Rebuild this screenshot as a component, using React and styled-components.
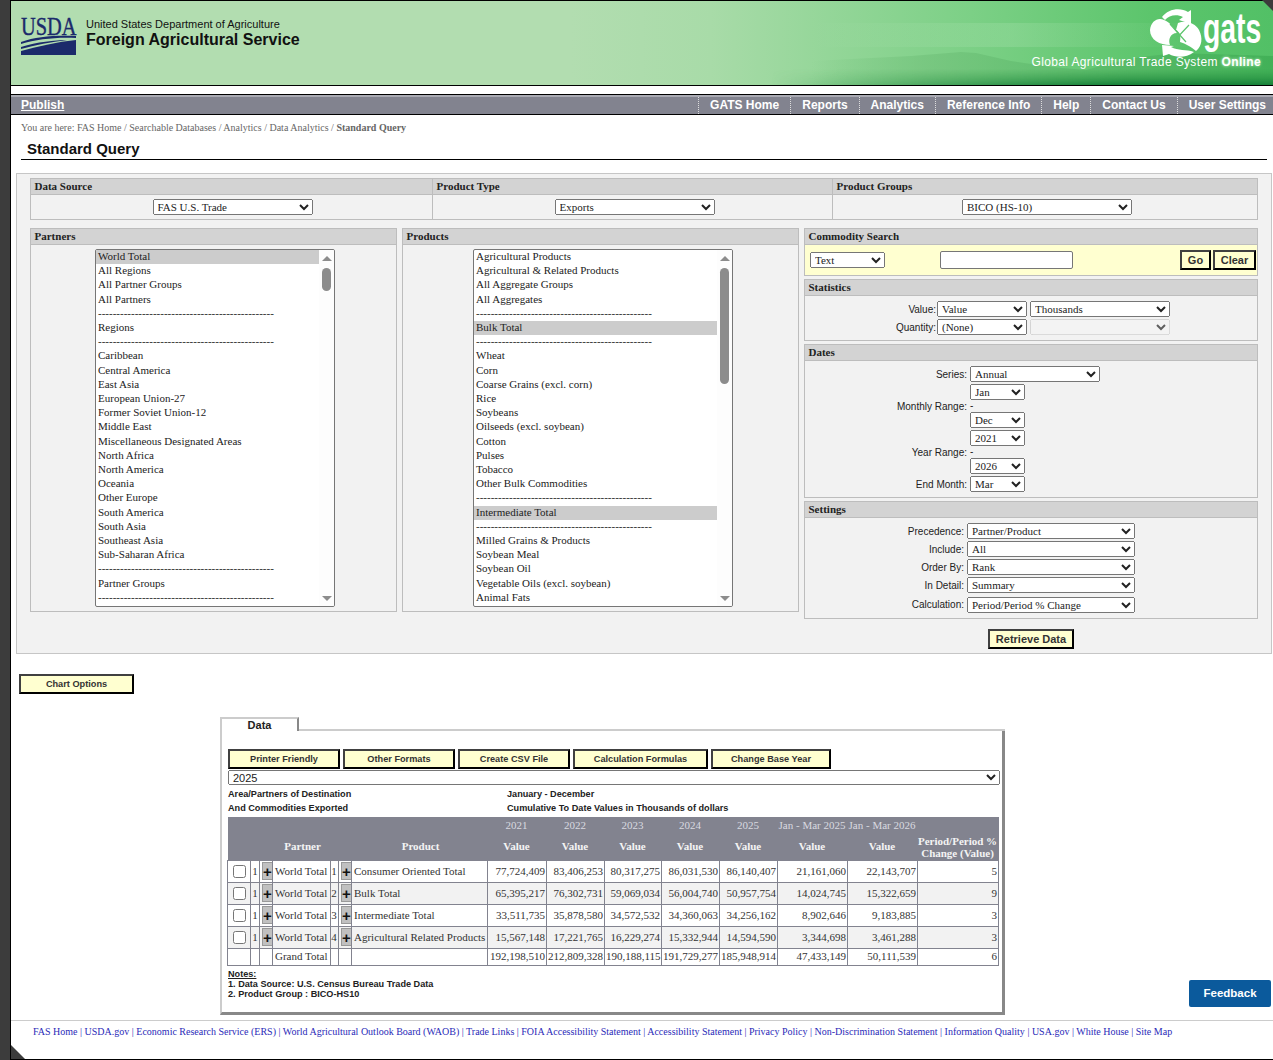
import React from 'react';
import styled, { createGlobalStyle } from 'styled-components';

const SANS = '"Liberation Sans", Arial, sans-serif';
const SERIF = '"Liberation Serif", "Times New Roman", serif';

const dash = '-'.repeat(48);

const partners = [
  'World Total', 'All Regions', 'All Partner Groups', 'All Partners', dash, 'Regions', dash,
  'Caribbean', 'Central America', 'East Asia', 'European Union-27', 'Former Soviet Union-12',
  'Middle East', 'Miscellaneous Designated Areas', 'North Africa', 'North America', 'Oceania',
  'Other Europe', 'South America', 'South Asia', 'Southeast Asia', 'Sub-Saharan Africa', dash,
  'Partner Groups', dash,
];

const products = [
  'Agricultural Products', 'Agricultural & Related Products', 'All Aggregate Groups', 'All Aggregates',
  dash, 'Bulk Total', dash, 'Wheat', 'Corn', 'Coarse Grains (excl. corn)', 'Rice', 'Soybeans',
  'Oilseeds (excl. soybean)', 'Cotton', 'Pulses', 'Tobacco', 'Other Bulk Commodities', dash,
  'Intermediate Total', dash, 'Milled Grains & Products', 'Soybean Meal', 'Soybean Oil',
  'Vegetable Oils (excl. soybean)', 'Animal Fats',
];

const navItems = ['GATS Home', 'Reports', 'Analytics', 'Reference Info', 'Help', 'Contact Us', 'User Settings'];
const dataButtons = [
  ['Printer Friendly', 112], ['Other Formats', 112], ['Create CSV File', 112],
  ['Calculation Formulas', 135], ['Change Base Year', 120],
];
const years = ['2021', '2022', '2023', '2024', '2025', 'Jan - Mar 2025', 'Jan - Mar 2026'];
const colWidths = [23, 9, 13, 58, 8, 13, 136, 59, 58, 57, 58, 58, 70, 70, 81];

const rows = [
  ['1', 'Consumer Oriented Total', '77,724,409', '83,406,253', '80,317,275', '86,031,530', '86,140,407', '21,161,060', '22,143,707', '5'],
  ['2', 'Bulk Total', '65,395,217', '76,302,731', '59,069,034', '56,004,740', '50,957,754', '14,024,745', '15,322,659', '9'],
  ['3', 'Intermediate Total', '33,511,735', '35,878,580', '34,572,532', '34,360,063', '34,256,162', '8,902,646', '9,183,885', '3'],
  ['4', 'Agricultural Related Products', '15,567,148', '17,221,765', '16,229,274', '15,332,944', '14,594,590', '3,344,698', '3,461,288', '3'],
];
const grandTotal = ['192,198,510', '212,809,328', '190,188,115', '191,729,277', '185,948,914', '47,433,149', '50,111,539', '6'];

const footerLinks = [
  'FAS Home', 'USDA.gov', 'Economic Research Service (ERS)', 'World Agricultural Outlook Board (WAOB)',
  'Trade Links', 'FOIA Accessibility Statement', 'Accessibility Statement', 'Privacy Policy',
  'Non-Discrimination Statement', 'Information Quality', 'USA.gov', 'White House', 'Site Map',
];

const Global = createGlobalStyle`
  html, body {
    margin: 0;
    padding: 0;
    background: #3c3c3c;
  }
  * { box-sizing: border-box; }
`;

const Page = styled.div`
  position: relative;
  margin-left: 10px;
  width: 1263px;
  height: 1060px;
  overflow: hidden;
  background: #fff;
  border-left: 1px solid #000;
  border-bottom: 1px solid #000;
  font-family: ${SANS};
`;
const CornerTop = styled.div`
  position: absolute;
  top: 0;
  right: 0;
  width: 0;
  height: 0;
  border-top: 11px solid #3c3c3c;
  border-left: 11px solid transparent;
  z-index: 3;
`;
const CornerBottom = styled.div`
  position: absolute;
  bottom: -1px;
  left: -1px;
  width: 0;
  height: 0;
  border-bottom: 16px solid #3c3c3c;
  border-right: 16px solid transparent;
`;

const Header = styled.header`
  position: relative;
  height: 86px;
  border-top: 1px solid #000;
  border-bottom: 1px solid #000;
  background: linear-gradient(90deg, #b2ddb0 0, #b2ddb0 560px, #a8dba8 700px, #7cd086 960px, #5cc56c 1140px, #52c066 1262px);
  display: flex;
  justify-content: space-between;
  overflow: hidden;
`;
const SceneryArt = styled.svg`
  position: absolute;
  left: 0;
  top: 0;
`;
const Brand = styled.div`
  position: relative;
  display: flex;
  gap: 9px;
  padding: 11px 0 0 10px;
`;
const BrandText = styled.div`
  padding-top: 6px;
  color: #111;
`;
const Dept = styled.div`
  font-size: 11px;
  line-height: 13px;
`;
const Agency = styled.div`
  font-size: 16px;
  font-weight: bold;
  line-height: 18px;
`;
const Gats = styled.div`
  position: relative;
  display: flex;
  flex-direction: column;
  align-items: flex-end;
  padding: 1px 12px 0 0;
`;
const Tagline = styled.div`
  margin-top: -2px;
  color: #fff;
  font-size: 12px;
  line-height: 14px;
  letter-spacing: 0.36px;
  white-space: nowrap;
  b { text-shadow: 0 0 3px #d8ffd8; }
`;

const Nav = styled.nav`
  margin-top: 8px;
  height: 21px;
  display: flex;
  justify-content: space-between;
  background: #82838f;
  border-top: 1px solid #000;
  border-bottom: 1px solid #000;
  box-shadow: inset 0 2px 0 #a9aab3;
  padding: 2px 7px 0 10px;
  font-size: 12px;
  font-weight: bold;
  line-height: 17px;
  color: #fff;
`;
const Publish = styled.a`
  color: #fff;
  text-decoration: underline;
`;
const NavList = styled.div`
  display: flex;
`;
const NavItem = styled.a`
  padding: 0 0 0 11px;
  margin-left: 11px;
  border-left: 1px dotted #ddd;
  color: #fff;
`;

const Crumbs = styled.div`
  margin: 7px 0 0 10px;
  font-family: ${SERIF};
  font-size: 10px;
  line-height: 12px;
  color: #666;
`;
const Title = styled.h1`
  margin: 5px 0 0 10px;
  width: 1246px;
  height: 21px;
  padding-left: 6px;
  border-bottom: 1px solid #000;
  font-size: 15px;
  line-height: 20px;
  font-weight: bold;
  color: #111;
`;

const Query = styled.div`
  margin: 13px 0 0 5px;
  width: 1256px;
  padding: 4px 0 4px 13px;
  background: #f2f2f2;
  border: 1px solid #c6c6c6;
`;
const TopRow = styled.div`
  display: flex;
`;
const MainRow = styled.div`
  display: flex;
  align-items: flex-start;
  gap: 5px;
  margin-top: 8px;
`;
const Stack = styled.div`
  display: flex;
  flex-direction: column;
  gap: 3px;
  width: 454px;
`;
const Section = styled.section`
  width: ${p => p.$w ? `${p.$w}px` : '100%'};
  height: ${p => p.$h ? `${p.$h}px` : 'auto'};
  border: 1px solid #bdbdbd;
  margin-left: ${p => p.$joined ? '-1px' : '0'};
`;
const Heading = styled.div`
  height: 16px;
  padding-left: 3.5px;
  background: #d3d3d3;
  border-bottom: 1px solid #bdbdbd;
  font-family: ${SERIF};
  font-size: 11px;
  font-weight: bold;
  line-height: 15px;
  color: #222;
`;
const Centered = styled.div`
  display: flex;
  justify-content: center;
  padding: 4px 0 0 ${p => p.$shift || 0}px;
`;
const Select = styled.select`
  display: block;
  margin: ${p => p.$mt || 0}px 0 0;
  width: ${p => p.$w}px;
  height: 16px;
  font-family: ${SERIF};
  font-size: 11px;
  color: #222;
`;

const ListHolder = styled.div`
  display: flex;
  justify-content: center;
  padding: 4px 0 4px ${p => p.$shift || 0}px;
`;
const List = styled.div`
  display: flex;
  width: ${p => p.$w}px;
  height: 358px;
  background: #fff;
  border: 1px solid #767676;
  border-radius: 2px;
  overflow: hidden;
`;
const Options = styled.div`
  flex: 1;
  min-width: 0;
  font-family: ${SERIF};
  font-size: 11px;
  color: #222;
`;
const Option = styled.div`
  padding: 0 0 1px 2px;
  line-height: 13.2px;
  white-space: nowrap;
  background: ${p => p.$selected ? '#cccccc' : 'transparent'};
`;
const Scrollbar = styled.div`
  width: 15px;
  flex: none;
  display: flex;
  flex-direction: column;
  align-items: center;
  padding: 6px 0 5px;
  background: #fdfdfd;
`;
const ArrowUp = styled.div`
  width: 0;
  height: 0;
  border-left: 5px solid transparent;
  border-right: 5px solid transparent;
  border-bottom: 5px solid #8c8c8c;
`;
const ArrowDown = styled(ArrowUp)`
  margin-top: auto;
  border-bottom: 0;
  border-top: 5px solid #8c8c8c;
`;
const Thumb = styled.div`
  margin-top: 7px;
  width: 9px;
  height: ${p => p.$h}px;
  background: #8c8c8c;
  border-radius: 5px;
`;

const SearchBody = styled.div`
  height: 30px;
  display: flex;
  align-items: center;
  padding: 0 1px 0 5px;
  background: #ffffd0;
`;
const SearchInput = styled.input`
  margin-left: 55px;
  width: 133px;
  height: 18px;
  padding: 0 3px;
  border: 1px solid #767676;
  border-radius: 2px;
  background: #fff;
`;
const YellowButton = styled.button`
  display: block;
  width: ${p => p.$w}px;
  height: 20px;
  margin: ${p => p.$m || '0'};
  padding: 0 0 ${p => p.$small ? 1 : 0}px;
  background: #ffffd0;
  border: 2px solid #000;
  border-top-color: #404040;
  border-left-color: #404040;
  font-family: ${SANS};
  font-size: ${p => p.$small ? 9.2 : 11}px;
  font-weight: bold;
  color: #333;
  white-space: nowrap;
`;
const Form = styled.div`
  display: grid;
  grid-template-columns: ${p => p.$label}px 1fr;
  column-gap: ${p => p.$gap}px;
  row-gap: 2px;
  padding-top: 5px;
  align-items: center;
`;
const Label = styled.div`
  padding-top: 1px;
  text-align: right;
  font-size: 10px;
  line-height: 12px;
  color: #222;
`;
const Inline = styled.div`
  display: flex;
  gap: 3px;
`;
const Range = styled.div`
  font-size: 10px;
  line-height: 12px;
  color: #222;
`;
const RetrieveRow = styled.div`
  display: flex;
  justify-content: flex-end;
  padding: 10px 0 0;
  width: 1044px;
`;

const Chart = styled.div`
  margin: 20px 0 0 8px;
`;
const TabArea = styled.div`
  margin: 23px 0 0 209px;
  width: 785px;
`;
const TabStrip = styled.div`
  display: flex;
  height: 14px;
`;
const Tab = styled.div`
  width: 79px;
  border-top: 2px solid #ccc;
  border-left: 2px solid #ccc;
  border-right: 2px solid #888;
  text-align: center;
  font-size: 11px;
  font-weight: bold;
  line-height: 12px;
  color: #222;
`;
const TabRule = styled.div`
  flex: 1;
  border-bottom: 2px solid #ccc;
`;
const TabBody = styled.div`
  padding: 18px 0 13px 6px;
  border-left: 2px solid #ccc;
  border-right: 3px solid #888;
  border-bottom: 3px solid #888;
`;
const ButtonRow = styled.div`
  display: flex;
  gap: 3px;
`;
const YearSelect = styled.select`
  display: block;
  margin-top: 1px;
  width: 772px;
  height: 15px;
  padding: 0 0 2px;
  font-family: ${SANS};
  font-size: 11px;
  color: #222;
`;
const Caption = styled.div`
  display: grid;
  grid-template-columns: 279px 1fr;
  margin-top: 2px;
  font-size: 9.15px;
  font-weight: bold;
  line-height: 14px;
  color: #222;
`;
const Table = styled.table`
  margin: 2px 0 0 -1px;
  width: 772px;
  table-layout: fixed;
  border-collapse: collapse;
  font-family: ${SERIF};
  font-size: 11px;
  color: #333;
`;
const Col = styled.col`
  width: ${p => p.$w}px;
`;
const HeadRow = styled.tr`
  height: ${p => p.$h}px;
`;
const Head = styled.th`
  padding: 0 ${p => p.$nudge ? 0 : 1}px ${p => p.$lift || 0}px ${p => p.$nudge ? 2 : 0}px;
  background: #82838f;
  color: ${p => p.$light ? '#d9dae0' : '#f4f4f4'};
  font-weight: ${p => p.$light ? 'normal' : 'bold'};
  line-height: 12px;
  text-align: center;
  white-space: nowrap;
`;
const Row = styled.tr`
  height: ${p => p.$total ? 17 : 22}px;
  background: ${p => p.$alt ? '#f2f2f2' : '#fff'};
`;
const Cell = styled.td`
  padding: 0 1px ${p => p.$lift || 0}px ${p => p.$pad ?? 1}px;
  border: 1px solid #82838f;
  text-align: ${p => p.$align || 'left'};
  line-height: 12px;
  white-space: nowrap;
  overflow: hidden;
`;
const ButtonCell = styled.td`
  padding: 0;
  border: 1px solid #82838f;
`;
const Check = styled.input`
  display: block;
  margin: 0 0 0 5px;
  width: 13px;
  height: 13px;
`;
const Plus = styled.div`
  margin: 0 0 0 2px;
  width: 11px;
  height: 18px;
  background: #c0c0c0;
  border: 1px solid #999;
  text-align: center;
  font-family: ${SANS};
  font-size: 15px;
  font-weight: bold;
  line-height: 18px;
  color: #111;
`;
const Notes = styled.div`
  margin-top: 3px;
  font-size: 9.15px;
  font-weight: bold;
  line-height: 10px;
  color: #222;
  u { display: block; }
`;
const Feedback = styled.a`
  position: absolute;
  left: 1178px;
  top: 980px;
  width: 82px;
  height: 27px;
  background: #0b5a9c;
  border-radius: 2px;
  color: #fff;
  font-size: 11.5px;
  font-weight: bold;
  line-height: 27px;
  text-align: center;
`;
const Footer = styled.footer`
  margin-top: 5px;
  padding: 5px 0 0 22px;
  border-top: 1px solid #ccc;
  font-family: ${SERIF};
  font-size: 10px;
  line-height: 12px;
  color: #2a2ab8;
  white-space: nowrap;
`;

function UsdaLogo() {
  return (
    <svg width="56" height="44" viewBox="0 0 56 44">
      <text transform="translate(0 23) scale(0.785 1)" fontFamily={SERIF} fontSize="26" fill="#1b2a6b" stroke="#1b2a6b" strokeWidth="0.4">USDA</text>
      <path d="M0 30 C16 24 36 23 55 24 L55 26 C36 25 16 27 0 32 Z" fill="#1b2a6b" />
      <path d="M0 35 C16 30 34 28 46 28 C30 30 14 33 0 37 Z" fill="#1b2a6b" />
      <path d="M0 39 C18 34 36 30 55 28 L55 43 L0 43 Z" fill="#1b2a6b" />
    </svg>
  );
}

function GatsLogo() {
  return (
    <svg width="113" height="55" viewBox="0 0 113 55">
      <g transform="translate(2 6)" fill="#fff">
        <path d="M12 9 C18 1 30 -1 38 4 L41 2 L41 16 L29 12 L33 9 C27 6 19 7 15 12 Z" />
        <path d="M0 22 C1 13 8 9 14 12 C20 14 24 20 27 25 C20 25 18 32 20 37 C10 37 0 32 0 22 Z" />
        <path d="M28 15 C36 12 45 15 49 22 C53 30 52 38 46 43 C40 38 36 36 30 34 C31 28 30 24 26 22 Z" />
        <path d="M21 39 C28 43 36 41 44 44 C36 50 26 50 19 46 L13 48 L12 37 L24 38 Z" />
      </g>
      <path d="M22 22 L38 40 M41 23 L27 38" stroke="#5cc56c" strokeWidth="1.2" fill="none" />
      <text transform="translate(55 41) scale(0.66 1)" fontFamily={SANS} fontSize="43" fontWeight="bold" fill="#fff">gats</text>
    </svg>
  );
}

function Scenery() {
  return (
    <SceneryArt width="1262" height="84" viewBox="0 0 1262 84">
      <defs>
        <linearGradient id="hill" x1="0" x2="1" y1="0" y2="0">
          <stop offset="0" stopColor="#6fbf78" stopOpacity="0" />
          <stop offset="0.25" stopColor="#6fbf78" stopOpacity="0.55" />
          <stop offset="1" stopColor="#3fae55" stopOpacity="0.85" />
        </linearGradient>
        <linearGradient id="ground" x1="0" x2="0" y1="0" y2="1">
          <stop offset="0" stopColor="#2f9c45" stopOpacity="0" />
          <stop offset="1" stopColor="#17803a" stopOpacity="1" />
        </linearGradient>
        <linearGradient id="fade" x1="0" x2="1" y1="0" y2="0">
          <stop offset="0" stopColor="#fff" stopOpacity="0" />
          <stop offset="0.7" stopColor="#fff" stopOpacity="1" />
          <stop offset="1" stopColor="#fff" stopOpacity="1" />
        </linearGradient>
        <linearGradient id="glow" x1="0" x2="1" y1="0" y2="0">
          <stop offset="0" stopColor="#d8f5d8" stopOpacity="0" />
          <stop offset="0.5" stopColor="#d8f5d8" stopOpacity="0.16" />
          <stop offset="1" stopColor="#d8f5d8" stopOpacity="0" />
        </linearGradient>
        <mask id="fadeMask">
          <rect x="760" width="502" height="84" fill="url(#fade)" />
        </mask>
      </defs>
      <rect x="800" y="22" width="400" height="24" fill="url(#glow)" />
      <path d="M800 60 L900 55 L950 51 L965 52 L1000 60 L1040 66 L1075 69 L1100 62 L1130 56 L1165 52 L1262 55 L1262 84 L800 84 Z" fill="url(#hill)" />
      <rect x="760" y="68" width="502" height="16" fill="url(#ground)" mask="url(#fadeMask)" />
    </SceneryArt>
  );
}

function ListBox({ items, selected, width, thumb }) {
  return (
    <List $w={width}>
      <Options>
        {items.map((item, i) => (
          <Option key={i} $selected={selected.includes(item)}>{item}</Option>
        ))}
      </Options>
      <Scrollbar>
        <ArrowUp />
        <Thumb $h={thumb} />
        <ArrowDown />
      </Scrollbar>
    </List>
  );
}

function Pick({ value, w, mt, disabled }) {
  return (
    <Select $w={w} $mt={mt} disabled={disabled} defaultValue={value}>
      <option value={value}>{value}</option>
    </Select>
  );
}

export default function App() {
  return (
    <Page>
      <Global />
      <CornerTop />
      <CornerBottom />

      <Header>
        <Scenery />
        <Brand>
          <UsdaLogo />
          <BrandText>
            <Dept>United States Department of Agriculture</Dept>
            <Agency>Foreign Agricultural Service</Agency>
          </BrandText>
        </Brand>
        <Gats>
          <GatsLogo />
          <Tagline>Global Agricultural Trade System <b>Online</b></Tagline>
        </Gats>
      </Header>

      <Nav>
        <Publish>Publish</Publish>
        <NavList>
          {navItems.map(item => <NavItem key={item}>{item}</NavItem>)}
        </NavList>
      </Nav>

      <Crumbs>You are here: FAS Home / Searchable Databases / Analytics / Data Analytics / <b>Standard Query</b></Crumbs>
      <Title>Standard Query</Title>

      <Query>
        <TopRow>
          <Section $w={403} $h={42}>
            <Heading>Data Source</Heading>
            <Centered $shift={2}><Pick value="FAS U.S. Trade" w={160} /></Centered>
          </Section>
          <Section $w={401} $h={42} $joined>
            <Heading>Product Type</Heading>
            <Centered $shift={4}><Pick value="Exports" w={160} /></Centered>
          </Section>
          <Section $w={426} $h={42} $joined>
            <Heading>Product Groups</Heading>
            <Centered $shift={4}><Pick value="BICO (HS-10)" w={170} /></Centered>
          </Section>
        </TopRow>

        <MainRow>
          <Section $w={367}>
            <Heading>Partners</Heading>
            <ListHolder $shift={3}>
              <ListBox items={partners} selected={['World Total']} width={240} thumb={23} />
            </ListHolder>
          </Section>
          <Section $w={397}>
            <Heading>Products</Heading>
            <ListHolder $shift={5}>
              <ListBox items={products} selected={['Bulk Total', 'Intermediate Total']} width={260} thumb={116} />
            </ListHolder>
          </Section>
          <Stack>
            <Section $h={48}>
              <Heading>Commodity Search</Heading>
              <SearchBody>
                <Pick value="Text" w={75} />
                <SearchInput />
                <YellowButton $w={31} $m="0 0 0 auto">Go</YellowButton>
                <YellowButton $w={43} $m="0 0 0 2px">Clear</YellowButton>
              </SearchBody>
            </Section>
            <Section $h={62}>
              <Heading>Statistics</Heading>
              <Form $label={131} $gap={1}>
                <Label>Value:</Label>
                <Inline><Pick value="Value" w={90} /><Pick value="Thousands" w={140} /></Inline>
                <Label>Quantity:</Label>
                <Inline><Pick value="(None)" w={90} /><Pick value="" w={140} disabled /></Inline>
              </Form>
            </Section>
            <Section $h={154}>
              <Heading>Dates</Heading>
              <Form $label={162} $gap={3}>
                <Label>Series:</Label>
                <Pick value="Annual" w={130} />
                <Label>Monthly Range:</Label>
                <div>
                  <Pick value="Jan" w={55} />
                  <Range>-</Range>
                  <Pick value="Dec" w={55} />
                </div>
                <Label>Year Range:</Label>
                <div>
                  <Pick value="2021" w={55} />
                  <Range>-</Range>
                  <Pick value="2026" w={55} />
                </div>
                <Label>End Month:</Label>
                <Pick value="Mar" w={55} />
              </Form>
            </Section>
            <Section $h={118}>
              <Heading>Settings</Heading>
              <Form $label={159} $gap={3}>
                <Label>Precedence:</Label>
                <Pick value="Partner/Product" w={168} />
                <Label>Include:</Label>
                <Pick value="All" w={168} />
                <Label>Order By:</Label>
                <Pick value="Rank" w={168} />
                <Label>In Detail:</Label>
                <Pick value="Summary" w={168} />
                <Label>Calculation:</Label>
                <Pick value="Period/Period % Change" w={168} mt={2} />
              </Form>
            </Section>
          </Stack>
        </MainRow>

        <RetrieveRow>
          <YellowButton $w={86}>Retrieve Data</YellowButton>
        </RetrieveRow>
      </Query>

      <Chart>
        <YellowButton $w={115} $small>Chart Options</YellowButton>
      </Chart>

      <TabArea>
        <TabStrip>
          <Tab>Data</Tab>
          <TabRule />
        </TabStrip>
        <TabBody>
          <ButtonRow>
            {dataButtons.map(([label, w]) => (
              <YellowButton key={label} $w={w} $small>{label}</YellowButton>
            ))}
          </ButtonRow>
          <YearSelect defaultValue="2025"><option>2025</option></YearSelect>
          <Caption>
            <div>Area/Partners of Destination</div>
            <div>January - December</div>
            <div>And Commodities Exported</div>
            <div>Cumulative To Date Values in Thousands of dollars</div>
          </Caption>
          <Table>
            <colgroup>
              {colWidths.map((w, i) => <Col key={i} $w={w} />)}
            </colgroup>
            <thead>
              <HeadRow $h={17}>
                <Head colSpan={7} />
                {years.map(y => <Head key={y} $light $lift={2}>{y}</Head>)}
                <Head />
              </HeadRow>
              <HeadRow $h={26}>
                <Head colSpan={3} />
                <Head $lift={2} $nudge>Partner</Head>
                <Head colSpan={2} />
                <Head $lift={2} $nudge>Product</Head>
                {years.map(y => <Head key={y} $lift={2}>Value</Head>)}
                <Head>Period/Period %<br />Change (Value)</Head>
              </HeadRow>
            </thead>
            <tbody>
              {rows.map((r, i) => (
                <Row key={r[0]} $alt={i % 2 === 1}>
                  <ButtonCell><Check type="checkbox" /></ButtonCell>
                  <Cell $align="center">1</Cell>
                  <ButtonCell><Plus>+</Plus></ButtonCell>
                  <Cell $pad={2}>World Total</Cell>
                  <Cell $pad={0} $align="center">{r[0]}</Cell>
                  <ButtonCell><Plus>+</Plus></ButtonCell>
                  <Cell $pad={2}>{r[1]}</Cell>
                  {r.slice(2).map((v, j) => <Cell key={j} $align="right">{v}</Cell>)}
                </Row>
              ))}
              <Row $total>
                <Cell />
                <Cell />
                <Cell />
                <Cell $pad={2} $lift={2}>Grand Total</Cell>
                <Cell />
                <Cell />
                <Cell />
                {grandTotal.map((v, j) => <Cell key={j} $align="right" $lift={2}>{v}</Cell>)}
              </Row>
            </tbody>
          </Table>
          <Notes>
            <u>Notes:</u>
            <div>1. Data Source: U.S. Census Bureau Trade Data</div>
            <div>2. Product Group : BICO-HS10</div>
          </Notes>
        </TabBody>
      </TabArea>

      <Footer>
        {footerLinks.map((link, i) => (
          <React.Fragment key={link}>{i > 0 && ' | '}<a>{link}</a></React.Fragment>
        ))}
      </Footer>

      <Feedback>Feedback</Feedback>
    </Page>
  );
}
